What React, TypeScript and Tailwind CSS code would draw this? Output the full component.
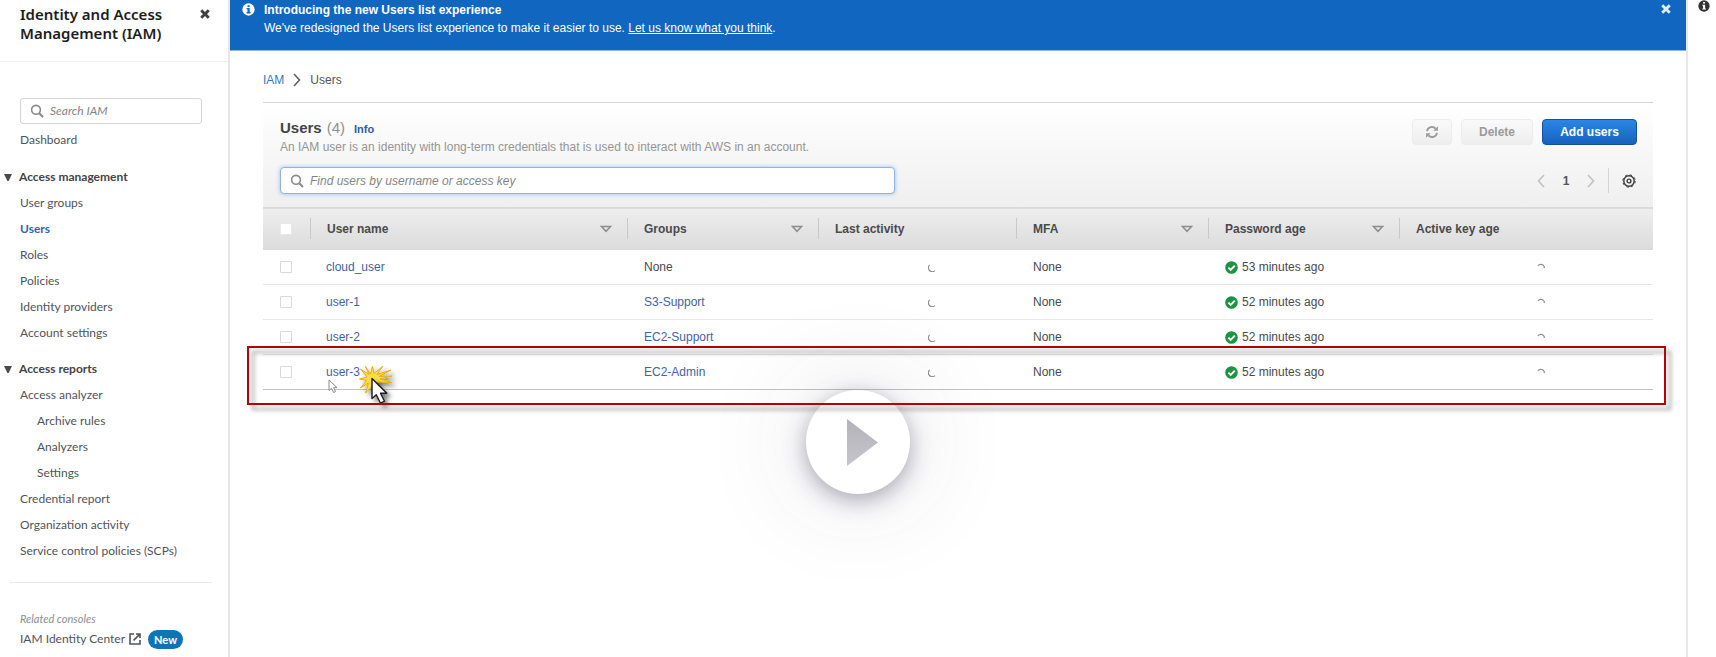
import React from "react";

type NavEntry = { label: string; nested?: boolean; active?: boolean };

const management: NavEntry[] = [
  { label: "User groups" },
  { label: "Users", active: true },
  { label: "Roles" },
  { label: "Policies" },
  { label: "Identity providers" },
  { label: "Account settings" },
];

const reports: NavEntry[] = [
  { label: "Access analyzer" },
  { label: "Archive rules", nested: true },
  { label: "Analyzers", nested: true },
  { label: "Settings", nested: true },
  { label: "Credential report" },
  { label: "Organization activity" },
  { label: "Service control policies (SCPs)" },
];

const users = [
  { name: "cloud_user", group: "", age: "53 minutes ago" },
  { name: "user-1", group: "S3-Support", age: "52 minutes ago" },
  { name: "user-2", group: "EC2-Support", age: "52 minutes ago" },
  { name: "user-3", group: "EC2-Admin", age: "52 minutes ago" },
];

const columns = [
  { label: "User name", sortable: true },
  { label: "Groups", sortable: true },
  { label: "Last activity", sortable: false },
  { label: "MFA", sortable: true },
  { label: "Password age", sortable: true },
  { label: "Active key age", sortable: false },
];

function CrossIcon({ className }: { className: string }) {
  return (
    <svg viewBox="0 0 12 12" className={className} fill="none" stroke="currentColor" strokeWidth="3.4" aria-hidden="true">
      <path d="M1.5 1.5l9 9M10.5 1.5l-9 9" />
    </svg>
  );
}

function InfoIcon({ className, mark }: { className: string; mark: string }) {
  return (
    <svg viewBox="0 0 14 14" className={className} aria-hidden="true">
      <circle cx="7" cy="7" r="6.6" fill="currentColor" />
      <path d="M5.9 2.3h2.3v1.9H5.9zM5 5.4h3.3v4.4h.9v1.4H5V9.8h.9V6.8H5z" fill={mark} />
    </svg>
  );
}

function SearchIcon() {
  return (
    <svg viewBox="0 0 14 14" className="h-3.5 w-3.5 shrink-0 text-[#8a8a8a]" fill="none" stroke="currentColor" aria-hidden="true">
      <circle cx="6" cy="5.8" r="4.4" strokeWidth="1.6" />
      <path d="M9.2 9.2l3.8 3.8" strokeWidth="2.1" />
    </svg>
  );
}

function Chevron({ className, left }: { className: string; left?: boolean }) {
  return (
    <svg viewBox="0 0 8 14" className={className} fill="none" stroke="currentColor" strokeWidth="1.7" aria-hidden="true">
      <path d={left ? "M7 1L1.5 7L7 13" : "M1 1l5.5 6L1 13"} />
    </svg>
  );
}

function SortIcon() {
  return (
    <svg viewBox="0 0 12 8" className="h-2 w-3" fill="none" stroke="#8d8d8d" strokeWidth="1.5" aria-hidden="true">
      <path d="M1.4 1.4h9.2L6 6.3z" />
    </svg>
  );
}

function CheckIcon() {
  return (
    <svg viewBox="0 0 13 13" className="h-[13px] w-[13px] shrink-0" aria-hidden="true">
      <circle cx="6.5" cy="6.5" r="6.3" fill="#1a9440" />
      <path d="M3.4 6.6l2.3 2.3 4.1-4.3" fill="none" stroke="#fff" strokeWidth="2" />
    </svg>
  );
}

function NavGroup({ title, entries }: { title: string; entries: NavEntry[] }) {
  return (
    <section>
      <button type="button" className="flex h-[26px] items-center gap-[7px] pl-1 font-bold text-[#444]">
        <svg viewBox="0 0 8 7" className="h-[7px] w-2" fill="#4a4a4a" aria-hidden="true">
          <path d="M0 0h8L4.6 7H3.4z" />
        </svg>
        {title}
      </button>
      <ul>
        {entries.map((entry) => (
          <li key={entry.label} className={entry.nested ? "pl-[37px]" : "pl-5"}>
            <a href="#" className={entry.active ? "block h-[26px] font-bold leading-[26px] text-[#2f66b0]" : "block h-[26px] leading-[26px]"}>
              {entry.label}
            </a>
          </li>
        ))}
      </ul>
    </section>
  );
}

function Sidebar() {
  return (
    <aside className="w-[230px] shrink-0 border-r-2 border-[#e6e6e6] font-[Lato,sans-serif] text-[12px] text-[#50545a]">
      <header className="flex h-[62px] items-start justify-between border-b border-[#eeeeee] pl-5 pr-[18px] pt-[5px]">
        <h1 className="font-['Noto_Sans',sans-serif] text-[15px] font-semibold leading-[19px] text-[#1d1d1d]">
          Identity and Access
          <br />
          Management (IAM)
        </h1>
        <button type="button" aria-label="Close navigation" className="pt-1 text-[#3f3f3f]">
          <CrossIcon className="h-2.5 w-2.5" />
        </button>
      </header>
      <nav className="pt-[36px]">
        <label className="ml-5 mr-[26px] flex h-[26px] items-center gap-1.5 rounded-[3px] border border-[#d5d5d5] px-[9px]">
          <SearchIcon />
          <input aria-label="Search IAM" placeholder="Search IAM" className="w-full min-w-0 italic outline-none placeholder:text-[#858585]" />
        </label>
        <a href="#" className="ml-5 mt-[3px] block h-[26px] leading-[26px]">Dashboard</a>
        <div className="mt-[11px]">
          <NavGroup title="Access management" entries={management} />
        </div>
        <div className="mt-[10px]">
          <NavGroup title="Access reports" entries={reports} />
        </div>
      </nav>
      <footer className="ml-2.5 mr-4 mt-[18px] border-t border-[#e8e8e8] pl-2.5 pt-7">
        <p className="text-[11px] italic leading-4 text-[#8a8d91]">Related consoles</p>
        <div className="flex h-6 items-center">
          <a href="#" className="flex items-center gap-1 whitespace-nowrap">
            IAM Identity Center
            <svg viewBox="0 0 12 12" className="h-3 w-3" fill="none" stroke="#50555a" strokeWidth="1.6" aria-hidden="true">
              <path d="M5 1H1v10h10V7M7 1h4v4M11 1L4.6 7.4" />
            </svg>
          </a>
          <span className="ml-[7px] rounded-full bg-[#0f73b8] px-1.5 text-[11px] font-bold leading-[19px] text-white">New</span>
        </div>
      </footer>
    </aside>
  );
}

function Banner() {
  return (
    <div className="flex h-[51px] items-start border-b border-[#8db4e0] bg-[#1166bf] pl-3 pr-[15px] pt-[2px] text-[12px] text-white">
      <InfoIcon className="mt-[1px] h-[13px] w-[13px] shrink-0" mark="#1166bf" />
      <div className="ml-[9px] grow">
        <p className="font-bold leading-4">Introducing the new Users list experience</p>
        <p className="pt-[2px] leading-4">
          We've redesigned the Users list experience to make it easier to use.{" "}
          <a href="#" className="underline">Let us know what you think</a>.
        </p>
      </div>
      <button type="button" aria-label="Dismiss" className="pt-[2px] text-[#e3edf8]">
        <CrossIcon className="h-2.5 w-2.5" />
      </button>
    </div>
  );
}

function Toolbar() {
  return (
    <div className="border-t border-[#d2d4d6] bg-linear-to-b from-white to-[#efeff0] pb-[13px] pl-[17px] pr-4 pt-[13px]">
      <div className="flex items-start justify-between">
        <div>
          <div className="flex h-6 items-baseline gap-[5px] leading-6">
            <h2 className="text-[15px] font-bold text-[#444]">Users</h2>
            <span className="text-[15px] text-[#8f8f8f]">(4)</span>
            <a href="#" className="ml-1 text-[11px] font-bold text-[#2a5db0]">Info</a>
          </div>
          <p className="text-[12px] leading-[14px] text-[#959595]">
            An IAM user is an identity with long-term credentials that is used to interact with AWS in an account.
          </p>
        </div>
        <div className="flex gap-[9px] pt-[3px] text-[12px] font-bold">
          <button type="button" aria-label="Refresh" className="flex h-[26px] w-10 items-center justify-center rounded-sm border border-[#ececec] bg-linear-to-b from-[#fafafa] to-[#eeeeee]">
            <svg viewBox="0 0 14 14" className="h-3.5 w-3.5" fill="none" stroke="#9b9b9b" strokeWidth="1.9" aria-hidden="true">
              <path d="M2 6.1A5 5 0 0 1 10.6 3.6M12 7.9A5 5 0 0 1 3.4 10.4" />
              <path d="M12.9 1.2v4.6H8.3zM1.1 12.8V8.2h4.6z" fill="#9b9b9b" stroke="none" />
            </svg>
          </button>
          <button type="button" className="h-[26px] w-[72px] rounded-sm border border-[#ececec] bg-linear-to-b from-[#fafafa] to-[#eeeeee] text-[#9b9b9b]">Delete</button>
          <button type="button" className="h-[26px] w-[95px] rounded-sm border border-[#1450a0] bg-linear-to-b from-[#2b86e6] to-[#1762bd] text-white">Add users</button>
        </div>
      </div>
      <div className="mt-[13px] flex items-center justify-between">
        <label className="flex h-[27px] w-[615px] items-center gap-[6px] rounded-sm border border-[#8fb4e2] bg-white px-[9px] shadow-[0_0_4px_rgba(90,150,230,0.55)]">
          <SearchIcon />
          <input aria-label="Find users" placeholder="Find users by username or access key" className="w-full min-w-0 text-[12px] italic outline-none placeholder:text-[#858585]" />
        </label>
        <div className="flex items-center">
          <button type="button" aria-label="Previous page" className="text-[#c3c3c3]"><Chevron left className="h-3.5 w-2" /></button>
          <span className="w-[42px] text-center text-[12px] font-bold text-[#555]">1</span>
          <button type="button" aria-label="Next page" className="text-[#c3c3c3]"><Chevron className="h-3.5 w-2" /></button>
          <span className="mx-[13px] h-[25px] border-l border-[#d5d5d5]" />
          <button type="button" aria-label="Preferences" className="mr-px">
            <svg viewBox="0 0 14 14" className="h-3.5 w-3.5" fill="none" stroke="#3c3c3c" aria-hidden="true">
              <circle cx="7" cy="7" r="5.2" strokeWidth="1.4" />
              <circle cx="7" cy="7" r="6.2" strokeWidth="1" strokeDasharray="2.4 2.47" />
              <circle cx="7" cy="7" r="1.9" strokeWidth="1.4" />
            </svg>
          </button>
        </div>
      </div>
    </div>
  );
}

function UsersTable() {
  return (
    <table className="w-full table-fixed border-collapse text-left text-[12px] text-[#4a4a4a]">
      <colgroup>
        <col className="w-[47px]" />
        <col className="w-[317px]" />
        <col className="w-[191px]" />
        <col className="w-[198px]" />
        <col className="w-[192px]" />
        <col className="w-[191px]" />
        <col className="w-[254px]" />
      </colgroup>
      <thead className="border-y border-[#d9d9da] bg-linear-to-b from-[#eeeeef] to-[#dcdcdd]">
        <tr className="h-[42px]">
          <th className="pl-[17px]">
            <input type="checkbox" aria-label="Select all users" className="block h-3 w-3 appearance-none rounded-[1px] border border-[#e8e8e8] bg-white" />
          </th>
          {columns.map((column) => (
            <th key={column.label} className="p-0">
              <div className="flex h-[21px] items-center justify-between border-l border-[#c9c9ca] pl-4 pr-[15px]">
                <span>{column.label}</span>
                {column.sortable && <button type="button" aria-label={`Sort by ${column.label}`}><SortIcon /></button>}
              </div>
            </th>
          ))}
        </tr>
      </thead>
      <tbody>
        {users.map((user) => (
          <tr key={user.name} className="h-[35px] border-b border-[#e6e6e6] last:border-[#c2c2c2]">
            <td className="pl-[17px]">
              <input type="checkbox" aria-label={`Select ${user.name}`} className="block h-3 w-3 appearance-none rounded-[1px] border border-[#d9d9d9] bg-white" />
            </td>
            <td className="pl-4"><a href="#" className="text-[#44639f]">{user.name}</a></td>
            <td className="pl-[17px]">{user.group ? <a href="#" className="text-[#44639f]">{user.group}</a> : "None"}</td>
            <td>
              <svg viewBox="0 0 8 8" className="ml-[110px] mt-0.5 h-2 w-2" fill="none" stroke="#8c8c8c" strokeWidth="1.1" aria-label="Loading" role="img">
                <path d="M1.6 1A3.6 3.6 0 0 0 7 6.6" />
              </svg>
            </td>
            <td className="pl-[17px]">None</td>
            <td className="pl-[17px]">
              <div className="flex items-center gap-1">
                <CheckIcon />
                {user.age}
              </div>
            </td>
            <td>
              <svg viewBox="0 0 8 8" className="ml-[138px] h-2 w-2" fill="none" stroke="#8c8c8c" strokeWidth="1.1" aria-label="Loading" role="img">
                <path d="M.8 3A3.6 3.6 0 0 1 7.4 5" />
              </svg>
            </td>
          </tr>
        ))}
      </tbody>
    </table>
  );
}

function Pointers() {
  return (
    <svg viewBox="0 0 80 54" className="pointer-events-none absolute -bottom-[29px] left-[62px] h-[54px] w-20" aria-hidden="true">
      <defs>
        <filter id="soft" x="-40%" y="-40%" width="200%" height="200%">
          <feDropShadow dx="3.5" dy="3.5" stdDeviation="2" floodOpacity="0.5" />
        </filter>
      </defs>
      <path d="M4 15v10.5l2.6-2.2 2 4.2 1.9-.9-1.900-4h3.400z" fill="#fff" stroke="#8a8a8a" strokeWidth="1" />
      <g filter="url(#soft)">
        <path
          d="M45.500 9L47.500 1L49 8.500L58 1L52 9.500L66 5L54 11.500L67 11L55 14L67 17.500L54 17L50 18L40.500 28L43.500 18L35.500 23L41.500 15.500L34.500 14L42 12L35.500 4L44 9.500L40.500 1.500z"
          fill="#fbdc48"
          stroke="#e9ae14"
          strokeWidth="1"
          strokeLinejoin="round"
        />
      </g>
      <g filter="url(#soft)">
        <path d="M47 13.5v20l4.3-3.800 4.200 8.500 4-2-4-8h6.300z" fill="#fff" stroke="#1b1b1b" strokeWidth="1.4" strokeLinejoin="round" />
      </g>
    </svg>
  );
}

function PlayButton() {
  return (
    <button
      type="button"
      aria-label="Play"
      className="absolute left-1/2 top-[390px] flex h-[104px] w-[104px] -translate-x-1/2 items-center justify-center rounded-full bg-white shadow-[0_6px_22px_rgba(60,55,85,0.42),0_0_110px_rgba(60,55,85,0.16)]"
    >
      <svg viewBox="0 0 31 47" className="ml-[9px] h-[47px] w-[31px]" aria-hidden="true">
        <defs>
          <linearGradient id="play" x1="0" y1="0" x2="0" y2="1">
            <stop offset="0" stopColor="#b3b2b9" />
            <stop offset="1" stopColor="#c6c5cc" />
          </linearGradient>
        </defs>
        <path d="M0 0l31 23.5L0 47z" fill="url(#play)" />
      </svg>
    </button>
  );
}

export default function App() {
  return (
    <div className="relative flex min-h-screen bg-white font-['Liberation_Sans',Arial,sans-serif]">
      <Sidebar />
      <main className="min-w-0 grow">
        <Banner />
        <div className="px-[33px]">
          <nav aria-label="Breadcrumb" className="flex h-[51px] items-center gap-[9px] pt-[7px] text-[12px] text-[#555]">
            <a href="#" className="text-[#3d76bd]">IAM</a>
            <Chevron className="h-3.5 w-2 text-[#666]" />
            <span>Users</span>
          </nav>
          <Toolbar />
          <div className="relative">
            <UsersTable />
            <div className="pointer-events-none absolute -bottom-[15px] -left-4 -right-[13px] z-10 h-[59px] border-2 border-[#b80006] drop-shadow-[5px_5px_2px_rgba(0,0,0,0.4)]" />
            <Pointers />
          </div>
        </div>
      </main>
      <aside className="w-[30px] shrink-0 border-l-2 border-[#e8e8e8] pl-[10px]">
        <button type="button" aria-label="Open help panel" className="block text-[#333]">
          <InfoIcon className="h-3 w-3" mark="#fff" />
        </button>
      </aside>
      <PlayButton />
    </div>
  );
}
